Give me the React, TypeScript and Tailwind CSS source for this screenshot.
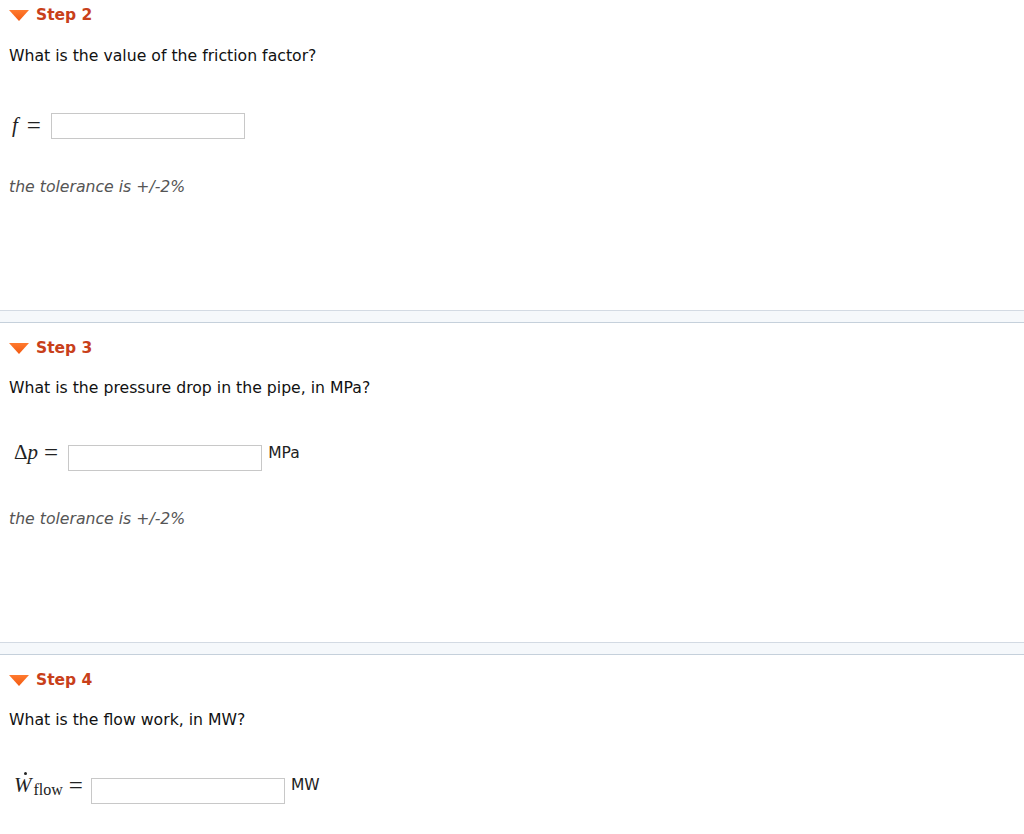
import React from 'react';

const sans = { fontFamily: '"DejaVu Sans", Verdana, sans-serif' };
const serif = { fontFamily: '"Liberation Serif", "Times New Roman", serif' };

const StepHeader: React.FC<{ label: string }> = ({ label }) => (
  <div className="flex items-center h-[28px] pt-[3px] pl-[9px]">
    <svg width="20" height="11" viewBox="0 0 20 11" className="mr-[7px]">
      <defs>
        <linearGradient id="tri" x1="0" y1="0" x2="0" y2="1">
          <stop offset="0" stopColor="#ff7a2e" />
          <stop offset="1" stopColor="#f25a12" />
        </linearGradient>
      </defs>
      <polygon points="0,0 20,0 10,11" fill="url(#tri)" />
    </svg>
    <span className="text-[15.5px] font-bold text-[#c8401a]" style={sans}>{label}</span>
  </div>
);

const Divider = () => (
  <div className="h-[13px] border-t border-[#d3dae3] border-b border-b-[#c5d0db] bg-[#f5f8fb]" />
);

const Answer = () => (
  <input
    type="text"
    className="w-[194px] h-[26px] border border-[#c8c8c8] bg-white outline-none"
  />
);

const Tolerance = () => (
  <div className="pl-[9px] text-[15.7px] italic text-[#555]" style={sans}>
    the tolerance is +/-2%
  </div>
);

const Eq: React.FC<{ className?: string }> = ({ className }) => (
  <span className={`text-[25px] leading-none ${className ?? ''}`} style={serif}>=</span>
);

export default function App() {
  return (
    <div className="w-[1024px] h-[834px] bg-white overflow-hidden text-[#222]">
      {/* Step 2 */}
      <div className="h-[310px]">
        <StepHeader label="Step 2" />
        <div className="pl-[9px] mt-[16px] text-[15.7px] text-[#111]" style={sans}>
          What is the value of the friction factor?
        </div>
        <div className="flex items-center pl-[12px] mt-[45px] h-[26px]">
          <span className="text-[21px] italic mr-[9px]" style={serif}>f</span>
          <Eq className="mr-[10px]" />
          <Answer />
        </div>
        <div className="mt-[36px]">
          <Tolerance />
        </div>
      </div>
      <Divider />

      {/* Step 3 */}
      <div className="h-[319px] pt-[10px]">
        <StepHeader label="Step 3" />
        <div className="pl-[9px] mt-[15px] text-[15.7px] text-[#111]" style={sans}>
          What is the pressure drop in the pipe, in MPa?
        </div>
        <div className="flex items-center pl-[14px] mt-[45px] h-[26px]">
          <span className="text-[21px] mr-[6px] mb-[10px]" style={serif}>
            Δ<span className="italic">p</span>
          </span>
          <Eq className="mr-[10px] mb-[10px]" />
          <Answer />
          <span className="ml-[6px] text-[15.5px] text-[#222] mb-[8px]" style={sans}>MPa</span>
        </div>
        <div className="mt-[36px]">
          <Tolerance />
        </div>
      </div>
      <Divider />

      {/* Step 4 */}
      <div className="pt-[10px]">
        <StepHeader label="Step 4" />
        <div className="pl-[9px] mt-[15px] text-[15.7px] text-[#111]" style={sans}>
          What is the flow work, in MW?
        </div>
        <div className="flex items-center pl-[14px] mt-[46px] h-[26px]">
          <span className="relative text-[21px] italic mb-[10px]" style={serif}>
            W
            <span className="absolute left-[10px] top-[2px] w-[3px] h-[3px] rounded-full bg-[#222]" />
          </span>
          <span className="text-[16px] ml-[2px] mr-[6px] mb-[2px]" style={serif}>flow</span>
          <Eq className="mr-[8px] mb-[10px]" />
          <Answer />
          <span className="ml-[6px] text-[15.5px] text-[#222] mb-[10px]" style={sans}>MW</span>
        </div>
      </div>
    </div>
  );
}
